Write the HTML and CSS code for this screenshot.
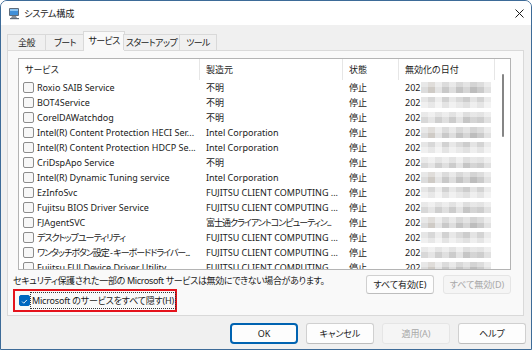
FILE: index.html
```html
<!DOCTYPE html>
<html lang="ja">
  <head>
    <meta charset="UTF-8" />
    <meta name="viewport" content="width=device-width, initial-scale=1.0" />
    <title>システム構成</title>
    <link rel="stylesheet" href="styles.css">
  </head>
  <body>
    <div class="window">
      <div class="titlebar">
        <svg class="app-icon" width="13" height="13" viewBox="0 0 13 13">
          <rect x="1" y="1" width="10" height="8" rx="1" fill="#5d6b7a" />
          <rect x="2" y="2" width="8" height="6" fill="#3f8fd8" />
          <rect x="2" y="2" width="8" height="2" fill="#8cc4f2" />
          <path d="M4 9 L8 9 L9 11 L3 11 Z" fill="#8a8f96" />
          <rect x="2" y="11" width="9" height="1.2" fill="#5d6b7a" />
        </svg>
        <span class="title">システム構成</span>
        <svg class="close" width="9" height="9" viewBox="0 0 9 9">
          <path d="M0.5 0.5 L8.5 8.5 M8.5 0.5 L0.5 8.5" stroke="#1a1a1a" stroke-width="1" />
        </svg>
      </div>

      <div class="content">
        <nav class="tabs">
          <div class="tab">全般</div>
          <div class="tab">ブート</div>
          <div class="tab selected">サービス</div>
          <div class="tab">スタートアップ</div>
          <div class="tab">ツール</div>
        </nav>

        <section class="panel">
          <div class="list">
            <div class="table">
              <div class="row head">
                <div>サービス</div>
                <div>製造元</div>
                <div>状態</div>
                <div>無効化の日付</div>
              </div>
              <div id="rows"></div>
            </div>
            <div class="scrollbar"><div class="thumb"></div></div>
          </div>

          <div class="foot">
            <div class="foot-left">
              <p class="note">セキュリティ保護された一部の Microsoft サービスは無効にできない場合があります。</p>
              <div class="mark">
                <span class="check on">
                  <svg width="11" height="11" viewBox="0 0 11 11">
                    <path d="M2.6 5.6 L4.6 7.6 L8.4 3.6" fill="none" stroke="#fff" stroke-width="1.1" />
                  </svg>
                </span>
                <span class="focus">Microsoft のサービスをすべて隠す(H)</span>
              </div>
            </div>
            <div class="foot-btns">
              <button class="btn">すべて有効(E)</button>
              <button class="btn" disabled>すべて無効(D)</button>
            </div>
          </div>
        </section>

        <div class="actions">
          <button class="btn default">OK</button>
          <button class="btn">キャンセル</button>
          <button class="btn" disabled>適用(A)</button>
          <button class="btn">ヘルプ</button>
        </div>
      </div>
    </div>

    <template>
      <div class="row">
        <div class="name"><span class="check"></span><span class="txt"></span></div>
        <div class="maker"></div>
        <div class="state">停止</div>
        <div class="date">202<span class="blur"></span></div>
      </div>
    </template>

    <script>
      const services = [
        ["Roxio SAIB Service", "不明"],
        ["BOT4Service", "不明"],
        ["CorelDAWatchdog", "不明"],
        ["Intel(R) Content Protection HECI Ser...", "Intel Corporation"],
        ["Intel(R) Content Protection HDCP Se...", "Intel Corporation"],
        ["CriDspApo Service", "不明"],
        ["Intel(R) Dynamic Tuning service", "Intel Corporation"],
        ["EzInfoSvc", "FUJITSU CLIENT COMPUTING ..."],
        ["Fujitsu BIOS Driver Service", "FUJITSU CLIENT COMPUTING ..."],
        ["FJAgentSVC", "富士通クライアントコンピューティン..."],
        ["デスクトップユーティリティ", "FUJITSU CLIENT COMPUTING ..."],
        ["ワンタッチボタン設定 - キーボードドライバー...", "FUJITSU CLIENT COMPUTING ..."],
        ["Fujitsu FUJ Device Driver Utility", "FUJITSU CLIENT COMPUTING ..."],
      ];

      const rows = document.querySelector("#rows");
      const temp = document.querySelector("template");
      const kana = /[\u3040-\u30ff]{3}/;

      services.forEach((s) => {
        const klon = temp.cloneNode(true).content;
        const txt = klon.querySelector(".txt");
        const maker = klon.querySelector(".maker");
        txt.textContent = s[0];
        maker.textContent = s[1];
        if (kana.test(s[0])) txt.classList.add("ja");
        if (kana.test(s[1])) maker.classList.add("ja");
        rows.appendChild(klon);
      });
    </script>
  </body>
</html>
```

FILE: styles.css
```css
* {
  box-sizing: border-box;
}

body {
  margin: 0;
  width: 532px;
  height: 350px;
  overflow: hidden;
  font-family: "Noto Sans", "Noto Sans CJK JP", sans-serif;
  font-feature-settings: "palt";
  font-size: 9px;
  color: #1a1a1a;
}

.window {
  width: 532px;
  height: 350px;
  border: 1px solid #3d6b98;
  border-radius: 7px 7px 0 0;
  background-color: #f0f0f0;
  overflow: hidden;
}

.titlebar {
  height: 24px;
  background-color: #fff;
  display: flex;
  align-items: center;
  padding-left: 7px;
  padding-right: 7px;
}

.title {
  margin-left: 3px;
  font-size: 9.2px;
  letter-spacing: -0.3px;
}

.close {
  margin-left: auto;
  margin-top: 1px;
}

.content {
  padding: 6px 5px 0 6px;
}

.ja {
  letter-spacing: -1px;
}

/* faner */

.tabs {
  display: flex;
  align-items: flex-end;
  height: 19px;
  position: relative;
  z-index: 1;
  letter-spacing: -0.6px;
}

.tab {
  height: 16px;
  line-height: 15px;
  text-align: center;
  border: 1px solid #d9d9d9;
  border-bottom: none;
  margin-right: -1px;
  background-color: #f0f0f0;
}

.tab:nth-child(1) { width: 39px; }
.tab:nth-child(2) { width: 40px; }
.tab:nth-child(4) { width: 57px; }
.tab:nth-child(5) { width: 38px; }

.tab.selected {
  width: 42px;
  height: 20px;
  margin-bottom: -1px;
  margin-left: -1px;
  margin-right: -2px;
  background-color: #f9f9f9;
  line-height: 17px;
}

.panel {
  width: 517px;
  height: 266px;
  border: 1px solid #d9d9d9;
  background-color: #f9f9f9;
  padding: 7px 12px 0 5px;
}

/* listen */

.list {
  margin-left: 5px;
  height: 212px;
  border: 1px solid #b4b4b4;
  background-color: #fff;
  display: flex;
  overflow: hidden;
}

.table {
  width: 476px;
}

.row {
  display: grid;
  grid-template-columns: 181px 143px 56px 96px;
  height: 15px;
  line-height: 15px;
  white-space: nowrap;
}

.row > div {
  overflow: hidden;
}

.row.head {
  height: 21px;
  line-height: 21px;
}

.row.head > div {
  padding-left: 6px;
  border-right: 1px solid #e6e6e6;
}

.name {
  display: flex;
  align-items: center;
  padding-left: 4px;
}

.check {
  flex: none;
  width: 11px;
  height: 11px;
  border: 1px solid #8c8c8c;
  border-radius: 2px;
  background-color: #f7f7f7;
  margin-right: 3px;
}

.check.on {
  border-color: #0067c0;
  background-color: #0067c0;
  display: flex;
}

.maker,
.state,
.date {
  padding-left: 6px;
}

.blur {
  display: inline-block;
  vertical-align: middle;
  width: 70px;
  height: 11px;
  margin-left: 1px;
  margin-top: -2px;
  background-image:
    linear-gradient(180deg, rgba(255,255,255,0.35) 0 50%, rgba(255,255,255,0) 50% 100%),
    linear-gradient(90deg, #dcdcdc 0 7px, #cfcbc6 7px 14px, #e4e4e4 14px 21px, #c9c9c9 21px 28px, #dedede 28px 35px, #c4c4c4 35px 42px, #d6d6d6 42px 49px, #bdbdbd 49px 56px, #cbcbcb 56px 63px, #e2e2e2 63px 70px);
}

#rows .row:nth-child(3n+2) .blur {
  background-image:
    linear-gradient(180deg, rgba(255,255,255,0) 0 50%, rgba(255,255,255,0.4) 50% 100%),
    linear-gradient(90deg, #e6e6e6 0 7px, #d8d8d8 7px 14px, #ededed 14px 21px, #d2d2d2 21px 28px, #e8e8e8 28px 35px, #dadada 35px 42px, #cdcdcd 42px 49px, #e4e4e4 49px 56px, #d4d4d4 56px 63px, #ebebeb 63px 70px);
}

#rows .row:nth-child(3n) .blur {
  background-image:
    linear-gradient(180deg, rgba(255,255,255,0.5) 0 50%, rgba(255,255,255,0.1) 50% 100%),
    linear-gradient(90deg, #d4d4d4 0 7px, #e2e2e2 7px 14px, #cacaca 14px 21px, #dcdcdc 21px 28px, #c6c6c6 28px 35px, #e0e0e0 35px 42px, #bfbfbf 42px 49px, #d0d0d0 49px 56px, #c8c8c8 56px 63px, #dedede 63px 70px);
}

.scrollbar {
  width: 16px;
  padding-top: 15px;
  display: flex;
  justify-content: center;
}

.thumb {
  width: 2px;
  height: 63px;
  border-radius: 1px;
  background-color: #858585;
}

/* under listen */

.foot {
  display: flex;
  justify-content: space-between;
  margin-top: 4px;
}

.note {
  margin: 0;
  height: 14px;
  line-height: 14px;
  white-space: nowrap;
  letter-spacing: -0.35px;
}

.mark {
  width: 164px;
  height: 23px;
  border: 2px solid #e5131c;
  display: flex;
  align-items: center;
  padding-left: 4px;
  margin-top: 1px;
  white-space: nowrap;
}

.mark .check {
  margin-right: 1px;
}

.focus {
  outline: 1px dotted #333;
  padding: 0 1px;
  line-height: 15px;
  letter-spacing: -0.2px;
}

.foot-btns {
  display: flex;
  gap: 9px;
  margin-top: 1px;
}

/* knapper */

.btn {
  font-family: inherit;
  font-feature-settings: "palt";
  font-size: 9px;
  color: #1a1a1a;
  height: 19px;
  width: 68px;
  padding: 0;
  border: 1px solid #d0d0d0;
  border-bottom-color: #bdbdbd;
  border-radius: 3px;
  background-color: #fdfdfd;
}

.btn:disabled {
  color: #a8a8a8;
  background-color: #f5f5f5;
  border-color: #e5e5e5;
}

.actions {
  display: flex;
  justify-content: flex-end;
  gap: 8px;
  margin-top: 7px;
}

.actions .btn {
  height: 21px;
}

.btn.default {
  border: 2px solid #0063b1;
  border-radius: 4px;
}
```
